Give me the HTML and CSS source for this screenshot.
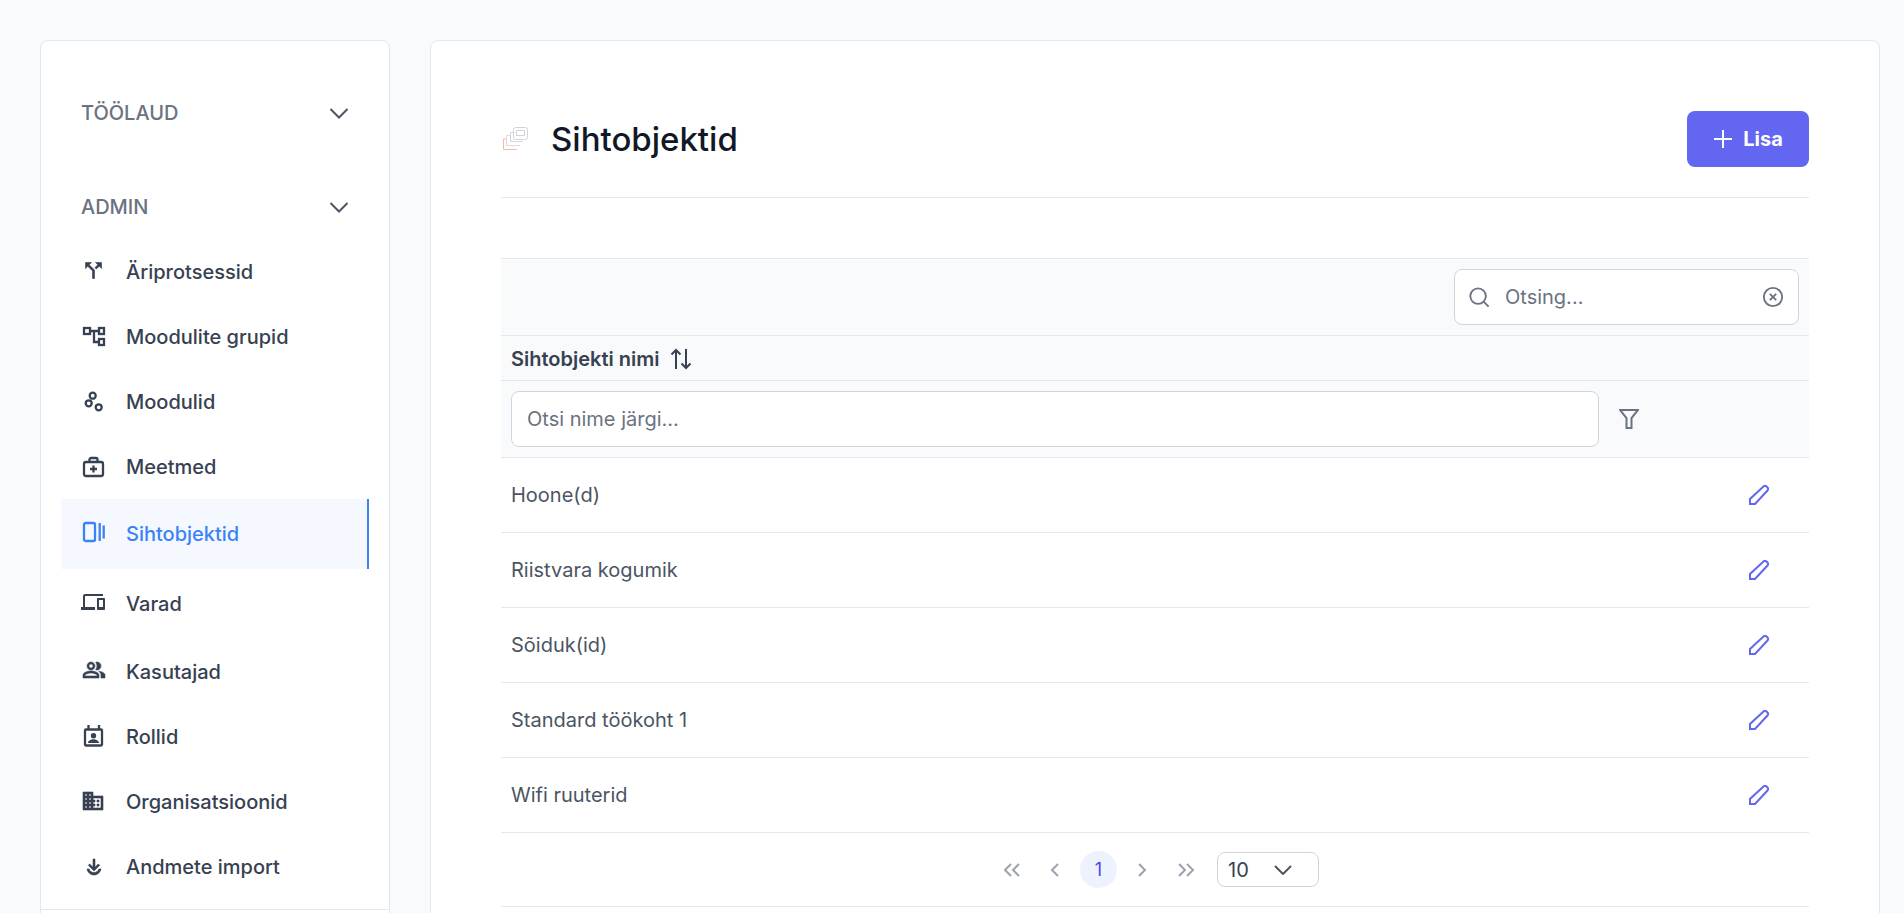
FILE: index.html
```html
<!DOCTYPE html>
<html lang="et">
<head>
<meta charset="utf-8">
<title>Sihtobjektid</title>
<link rel="stylesheet" href="styles.css">
</head>
<body>
<div class="page">
  <aside class="sidebar">
    <div class="group-label group-first"><span>TÖÖLAUD</span><svg class="chev" viewBox="0 0 20 20"><path d="M1.500 6L10 14.500 18.500 6"/></svg></div>
    <div class="group-label group-second"><span>ADMIN</span><svg class="chev" viewBox="0 0 20 20"><path d="M1.500 6L10 14.500 18.500 6"/></svg></div>
    <nav class="nav">
      <a class="nav-item"><svg class="nav-icon" viewBox="0 0 24 24"><path class="fill heavy" transform="translate(-1.500 -1.500)" d="M14 4l2.290 2.290-2.880 2.880 1.420 1.420 2.880-2.880L20 10V4zm-4 0H4v6l2.290-2.290 4.710 4.700V20h2v-8.410l-5.290-5.300z"/></svg><span>Äriprotsessid</span></a>
      <a class="nav-item"><svg class="nav-icon" viewBox="0 0 24 24"><g class="line"><rect x="1" y="3" width="6" height="6"/><rect x="16" y="3" width="5" height="6"/><rect x="16" y="14" width="5" height="6"/><path d="M7 6h9M11 6v11h5"/></g></svg><span>Moodulite grupid</span></a>
      <a class="nav-item"><svg class="nav-icon" viewBox="0 0 24 24"><g class="line"><circle cx="9.700" cy="5.700" r="3"/><circle cx="5.700" cy="13.300" r="3"/><circle cx="15.700" cy="17.300" r="3"/></g></svg><span>Moodulid</span></a>
      <a class="nav-item"><svg class="nav-icon" viewBox="0 0 24 24"><g class="line"><rect x="1" y="7" width="19" height="14" rx="2"/><path d="M6.500 7V4.500A1.500 1.500 0 0 1 8 3h5a1.500 1.500 0 0 1 1.500 1.500V7M10.500 10.500v7M7 14h7"/></g></svg><span>Meetmed</span></a>
      <a class="nav-item nav-active"><svg class="nav-icon" viewBox="0 0 24 24"><g class="line"><rect x="1" y="1" width="11" height="18" rx="1.500"/><path d="M16.700 1v18M20.700 3.500v13"/></g></svg><span>Sihtobjektid</span></a>
      <a class="nav-item nav-tall"><svg class="nav-icon" viewBox="0 0 24 24"><path class="fill" transform="translate(-2 -2)" d="M4 6h18V4H4c-1.100 0-2 .9-2 2v11H0v3h14v-3H4V6zm19 2h-6c-.55 0-1 .45-1 1v10c0 .55.45 1 1 1h6c.55 0 1-.45 1-1V9c0-.55-.45-1-1-1zm-1 9h-4v-7h4v7z"/></svg><span>Varad</span></a>
      <a class="nav-item"><svg class="nav-icon" viewBox="0 0 24 24"><path class="fill heavy" transform="translate(-1 -2)" d="M16.670 13.130C18.040 14.060 19 15.320 19 17v3h4v-3c0-2.180-3.570-3.470-6.330-3.870zM15 12c2.210 0 4-1.790 4-4s-1.790-4-4-4c-.47 0-.91.1-1.330.24C14.500 5.270 15 6.580 15 8s-.5 2.730-1.330 3.760c.42.14.86.24 1.330.24zM9 12c2.210 0 4-1.790 4-4s-1.790-4-4-4-4 1.790-4 4 1.790 4 4 4zm0-6c1.100 0 2 .9 2 2s-.9 2-2 2-2-.9-2-2 .9-2 2-2zM9 13c-2.670 0-8 1.340-8 4v3h16v-3c0-2.660-5.330-4-8-4zm6 5H3v-.99C3.200 16.290 6.300 15 9 15s5.800 1.290 6 2v1z"/></svg><span>Kasutajad</span></a>
      <a class="nav-item"><svg class="nav-icon" viewBox="0 0 24 24"><g class="line"><rect x="2" y="4.500" width="17" height="16" rx="1"/><path d="M5.500 0v5M16 0v5"/></g><path class="fill" d="M10.500 8a2.700 2.700 0 1 1 0 5.400 2.700 2.700 0 0 1 0-5.400zM5 18c0-2.500 3.500-3.700 5.500-3.700S16 15.500 16 18z"/></svg><span>Rollid</span></a>
      <a class="nav-item"><svg class="nav-icon" viewBox="0 0 24 24"><path class="fill heavy" transform="translate(-2 -1)" d="M12 7V3H2v18h20V7H12zM6 19H4v-2h2v2zm0-4H4v-2h2v2zm0-4H4V9h2v2zm0-4H4V5h2v2zm4 12H8v-2h2v2zm0-4H8v-2h2v2zm0-4H8V9h2v2zm0-4H8V5h2v2zm10 12h-8v-2h2v-2h-2v-2h2v-2h-2V9h8v10zm-2-8h-2v2h2v-2zm0 4h-2v2h2v-2z"/></svg><span>Organisatsioonid</span></a>
      <a class="nav-item"><svg class="nav-icon" viewBox="0 0 24 24"><path class="fill heavy" transform="translate(-1 1)" d="M11 3h2v8.200l3.300-3.300 1.400 1.400L12 15 6.300 9.300l1.400-1.400L11 11.200z"/><path class="fill heavy" transform="translate(-1 0)" d="M5 14h2.200c.5 2 2.400 3.500 4.800 3.500s4.300-1.500 4.800-3.500H19c-.5 3.300-3.500 6-7 6s-6.500-2.700-7-6z"/></svg><span>Andmete import</span></a>
    </nav>
    <div class="sidebar-divider"></div>
  </aside>

  <main class="main">
    <header class="head">
      <div class="head-title">
        <svg class="title-icon" viewBox="0 0 28 26">
          <rect class="ti-a" x="11.500" y="1.500" width="14" height="12" rx="2"/>
          <rect class="ti-a" x="14.500" y="4.500" width="8" height="5"/>
          <path class="ti-b" d="M8.500 15.500V6.500H11M8.500 15.500H21"/>
          <path class="ti-c" d="M4.500 19.500V9.500H8M4.500 19.500H18"/>
          <path class="ti-d" d="M1.500 23.500V13H4.500M1.500 23.500H15"/>
        </svg>
        <h1>Sihtobjektid</h1>
      </div>
      <button class="btn-add"><svg class="btn-plus" viewBox="0 0 20 20"><path d="M10 1v18M1 10h18"/></svg>Lisa</button>
    </header>

    <table class="table">
      <colgroup><col><col class="col-action"></colgroup>
      <thead>
        <tr class="row-toolbar">
          <th colspan="2">
            <div class="toolbar">
              <label class="search">
                <svg class="search-icon" viewBox="0 0 24 24"><circle cx="11" cy="11" r="8.500"/><path d="M17 17l5.500 5.500"/></svg>
                <input class="search-input" placeholder="Otsing...">
                <svg class="clear-icon" viewBox="0 0 24 24"><circle cx="12" cy="12" r="10"/><path d="M8.500 8.500l7 7M15.500 8.500l-7 7"/></svg>
              </label>
            </div>
          </th>
        </tr>
        <tr class="row-head">
          <th colspan="2">
            <div class="head-cell">Sihtobjekti nimi
              <svg class="sort-icon" viewBox="0 0 22 24"><path d="M6 22V3M1.500 7.500L6 3l4.500 4.500M16 2v19M11.500 16.500L16 21l4.500-4.500"/></svg>
            </div>
          </th>
        </tr>
        <tr class="row-filter">
          <th colspan="2">
            <div class="filter">
              <input class="filter-input" placeholder="Otsi nime järgi...">
              <svg class="filter-icon" viewBox="0 0 20 20"><path d="M1 1h18l-6.500 8v10h-5V9z"/></svg>
            </div>
          </th>
        </tr>
      </thead>
      <tbody>
        <tr><td>Hoone(d)</td><td class="cell-action"><svg class="edit-icon" viewBox="0 0 20 20"><path d="M1 19v-5L14.500 1.500a2.200 2.200 0 0 1 3 0l1 1a2.200 2.200 0 0 1 0 3L6 19z"/></svg></td></tr>
        <tr><td>Riistvara kogumik</td><td class="cell-action"><svg class="edit-icon" viewBox="0 0 20 20"><path d="M1 19v-5L14.500 1.500a2.200 2.200 0 0 1 3 0l1 1a2.200 2.200 0 0 1 0 3L6 19z"/></svg></td></tr>
        <tr><td>Sõiduk(id)</td><td class="cell-action"><svg class="edit-icon" viewBox="0 0 20 20"><path d="M1 19v-5L14.500 1.500a2.200 2.200 0 0 1 3 0l1 1a2.200 2.200 0 0 1 0 3L6 19z"/></svg></td></tr>
        <tr><td>Standard töökoht 1</td><td class="cell-action"><svg class="edit-icon" viewBox="0 0 20 20"><path d="M1 19v-5L14.500 1.500a2.200 2.200 0 0 1 3 0l1 1a2.200 2.200 0 0 1 0 3L6 19z"/></svg></td></tr>
        <tr><td>Wifi ruuterid</td><td class="cell-action"><svg class="edit-icon" viewBox="0 0 20 20"><path d="M1 19v-5L14.500 1.500a2.200 2.200 0 0 1 3 0l1 1a2.200 2.200 0 0 1 0 3L6 19z"/></svg></td></tr>
      </tbody>
    </table>

    <div class="pager">
      <span class="pg-btn"><svg class="pg-icon" viewBox="0 0 18 14"><path d="M8 1L2 7l6 6M16 1l-6 6 6 6"/></svg></span>
      <span class="pg-btn"><svg class="pg-icon pg-single" viewBox="0 0 10 14"><path d="M8 1L2 7l6 6"/></svg></span>
      <span class="pg-btn pg-current">1</span>
      <span class="pg-btn"><svg class="pg-icon pg-single" viewBox="0 0 10 14"><path d="M2 1l6 6-6 6"/></svg></span>
      <span class="pg-btn"><svg class="pg-icon" viewBox="0 0 18 14"><path d="M2 1l6 6-6 6M10 1l6 6-6 6"/></svg></span>
      <div class="pg-select"><span>10</span><svg class="pg-chev" viewBox="0 0 18 10"><path d="M1 1l8 8 8-8"/></svg></div>
    </div>
  </main>
</div>
</body>
</html>
```

FILE: styles.css
```css
* { box-sizing: border-box; }

html, body {
  margin: 0;
  height: 100%;
  overflow: hidden;
}

body {
  background: #f9fafb;
  font-family: Inter, "Liberation Sans", sans-serif;
  color: #374151;
  font-size: 20px;
}

.page {
  display: flex;
  gap: 40px;
  padding: 40px 24px 0 40px;
  align-items: flex-start;
}

/* Sidebar */
.sidebar {
  width: 350px;
  flex: none;
  height: 900px;
  background: #fff;
  border: 1px solid #e2e8f0;
  border-radius: 8px;
  padding-top: 58px;
}

.group-label {
  display: flex;
  align-items: center;
  justify-content: space-between;
  height: 28px;
  padding: 0 40px 0 40px;
  color: #6b7280;
  font-weight: 500;
}

.group-second { margin-top: 66px; margin-bottom: 18px; }

.chev { width: 20px; height: 20px; fill: none; stroke: #4b5563; stroke-width: 2; }

.nav { padding: 0 20px; }

.nav-item {
  display: flex;
  align-items: center;
  gap: 19px;
  height: 65px;
  padding-left: 22px;
  font-weight: 500;
  color: #374151;
}

.nav-active {
  height: 70px;
  background: #f5f8ff;
  border-right: 2px solid #3b82f6;
  color: #3b82f6;
}

.nav-tall { height: 70px; }

.nav-icon { width: 24px; height: 24px; flex: none; overflow: visible; }
.nav-icon .fill { fill: currentColor; }
.nav-icon .heavy { stroke: currentColor; stroke-width: 0.6; }
.nav-icon .line { fill: none; stroke: currentColor; stroke-width: 2.3; }

.sidebar-divider { margin-top: 10px; border-top: 1px solid #e2e8f0; }

/* Main */
.main {
  width: 1450px;
  flex: none;
  height: 900px;
  background: #fff;
  border: 1px solid #e2e8f0;
  border-radius: 8px;
  padding: 70px 70px 0;
}

.head {
  display: flex;
  align-items: center;
  justify-content: space-between;
  height: 87px;
  padding-bottom: 30px;
  border-bottom: 1px solid #e5e7eb;
  margin-bottom: 60px;
}

.head-title { display: flex; align-items: center; gap: 21px; }

.head-title h1 {
  margin: 0;
  font-size: 33px;
  line-height: 40px;
  font-weight: 500;
  color: #111827;
}

.title-icon { width: 28px; height: 26px; fill: none; stroke-width: 1; margin-left: 1px; }
.ti-a { stroke: #d1d5db; }
.ti-b { stroke: #d4d4e8; }
.ti-c { stroke: #e8dcc8; }
.ti-d { stroke: #eeb9b9; }

.btn-add {
  display: flex;
  align-items: center;
  justify-content: center;
  gap: 10px;
  width: 122px;
  height: 56px;
  border: 0;
  border-radius: 8px;
  background: #6366f1;
  color: #fff;
  font: 700 20px Inter, "Liberation Sans", sans-serif;
}

.btn-plus { width: 20px; height: 20px; fill: none; stroke: #fff; stroke-width: 2; }

/* Table */
.table {
  width: 1308px;
  table-layout: fixed;
  border-collapse: collapse;
  font-size: 20px;
  color: #4b5563;
}

.col-action { width: 100px; }

th { padding: 0; font-weight: 400; text-align: left; background: #f9fafb; }

.table tr { border-bottom: 1px solid #e5e7eb; }
.row-toolbar { border-top: 1px solid #e5e7eb; }

.toolbar { display: flex; justify-content: flex-end; padding: 10px; height: 76px; }

.search {
  display: flex;
  align-items: center;
  width: 345px;
  height: 56px;
  padding: 0 14px 0 13px;
  background: #fff;
  border: 1px solid #d1d5db;
  border-radius: 8px;
}

.search-icon, .clear-icon { width: 22px; height: 22px; flex: none; fill: none; stroke: #6b7280; stroke-width: 2; }

input {
  border: 0;
  outline: 0;
  background: transparent;
  font: 400 20px Inter, "Liberation Sans", sans-serif;
  color: #374151;
}

input::placeholder { color: #6b7280; opacity: 1; }

.search-input { flex: 1; min-width: 0; padding: 0 15px; }

.head-cell {
  display: flex;
  align-items: center;
  gap: 10px;
  height: 44px;
  padding: 1px 0 0 10px;
  font-weight: 600;
  color: #374151;
}

.sort-icon { width: 22px; height: 24px; fill: none; stroke: #374151; stroke-width: 2; }

.filter { display: flex; align-items: center; gap: 20px; height: 76px; padding-left: 10px; }

.filter-input {
  width: 1088px;
  height: 56px;
  padding: 0 15px;
  background: #fff;
  border: 1px solid #d1d5db;
  border-radius: 8px;
}

.filter-icon { width: 20px; height: 20px; fill: none; stroke: #6b7280; stroke-width: 2; }

td { height: 75px; padding: 0 0 0 10px; }

.cell-action { padding: 0; text-align: left; }

.edit-icon { display: block; width: 20px; height: 20px; margin-left: 40px; fill: none; stroke: #6366f1; stroke-width: 2; }

/* Pager */
.pager {
  display: flex;
  align-items: center;
  justify-content: center;
  gap: 6.5px;
  width: 1308px;
  height: 74px;
  padding-left: 2px;
  border-bottom: 1px solid #e5e7eb;
}

.pg-btn {
  display: flex;
  align-items: center;
  justify-content: center;
  width: 37px;
  height: 37px;
  border-radius: 50%;
  font-size: 18px;
}

.pg-current { background: #eef2ff; color: #4f46e5; }

.pg-icon { width: 18px; height: 14px; fill: none; stroke: #9ca3af; stroke-width: 2; }
.pg-single { width: 10px; }

.pg-select {
  display: flex;
  align-items: center;
  justify-content: space-between;
  width: 102px;
  height: 35px;
  margin-left: 6.5px;
  padding: 0 26px 0 10px;
  background: #fff;
  border: 1px solid #d1d5db;
  border-radius: 8px;
  color: #374151;
}

.pg-chev { width: 18px; height: 10px; fill: none; stroke: #4b5563; stroke-width: 2; }
```
